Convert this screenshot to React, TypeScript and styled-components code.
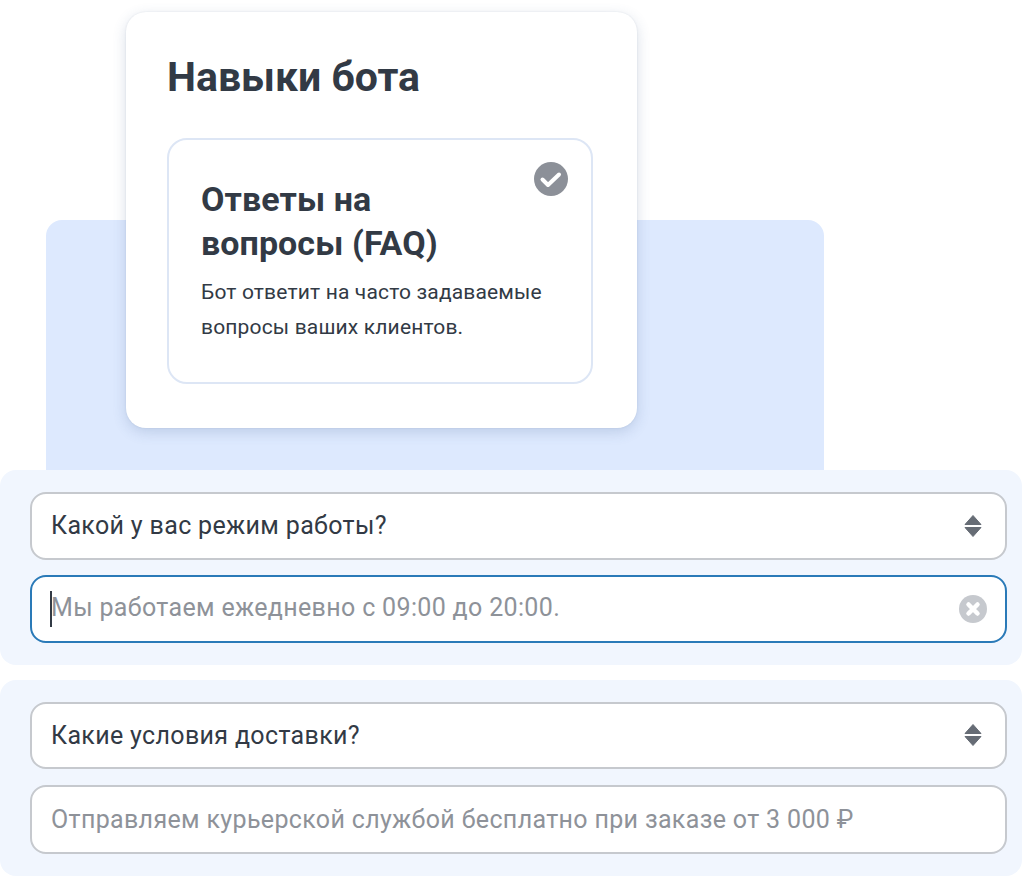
import { createGlobalStyle, styled } from "styled-components";

const GlobalStyle = createGlobalStyle`
  html, body {
    margin: 0;
    background: #fff;
    font-family: Roboto, "Noto Sans", sans-serif;
  }
`;

const Page = styled.div`
  width: 1022px;
  height: 876px;
  overflow: hidden;
  padding-top: 12px;
  box-sizing: border-box;
`;

const Hero = styled.div`
  position: relative;
  height: 458px;
  display: flex;
  flex-direction: column;
  justify-content: flex-end;
  padding-left: 46px;
`;

const Backdrop = styled.div`
  width: 778px;
  height: 250px;
  background: #dde9fe;
  border-radius: 16px 16px 0 0;
`;

const SkillsCard = styled.section`
  position: absolute;
  top: 0;
  left: 126px;
  width: 511px;
  height: 416px;
  box-sizing: border-box;
  padding: 42px 44px 44px 41px;
  background: #fff;
  border-radius: 20px;
  box-shadow: 0 4px 14px rgba(60, 90, 140, 0.2), 0 0 2px rgba(60, 80, 110, 0.12);
`;

const Title = styled.h2`
  margin: 0 0 38px;
  font-size: 41px;
  line-height: 46px;
  font-weight: 700;
  color: #323a45;
`;

const SkillCard = styled.div`
  position: relative;
  height: 246px;
  box-sizing: border-box;
  padding: 37px 20px 0 32px;
  border: 2px solid #dde6f5;
  border-radius: 20px;
`;

const SkillName = styled.h3`
  margin: 0 0 10px;
  font-size: 34px;
  letter-spacing: 0.08px;
  line-height: 44px;
  font-weight: 700;
  color: #323a45;
`;

const SkillText = styled.p`
  margin: 0;
  font-size: 21px;
  letter-spacing: 0.16px;
  line-height: 35px;
  color: #323a45;
`;

const CheckBadge = styled.svg`
  position: absolute;
  top: 22px;
  right: 23.5px;
  width: 34px;
  height: 34px;
`;

const Panel = styled.div`
  display: flex;
  flex-direction: column;
  gap: 15.5px;
  padding: 22px 15.5px 22px 30px;
  background: #f1f6fe;
  border-radius: 16px;
  & + & {
    margin-top: 15px;
  }
`;

const Field = styled.div<{ $focused?: boolean; $height: number }>`
  display: flex;
  align-items: center;
  justify-content: space-between;
  height: ${({ $height }) => $height}px;
  box-sizing: border-box;
  padding: 0 18px 0 19px;
  background: #fff;
  border: 2px solid ${({ $focused }) => ($focused ? "#2a7ab8" : "#c6c9ce")};
  border-radius: 16px;
`;

const FieldText = styled.span<{ $muted?: boolean }>`
  font-size: 25px;
  letter-spacing: 0.34px;
  color: ${({ $muted }) => ($muted ? "#8e9299" : "#323a45")};
`;

const Caret = styled.span`
  display: inline-block;
  width: 2px;
  height: 36px;
  margin: 0 -1px;
  vertical-align: middle;
  background: #323a45;
`;

const IconSlot = styled.span`
  display: flex;
  justify-content: center;
  width: 28px;
`;

const Stepper = () => (
  <IconSlot>
    <svg width="18" height="24" viewBox="0 0 18 24">
      <path d="M9 1.5 17 10.5H1Z" fill="#666c75" stroke="#666c75" strokeLinejoin="round" />
      <path d="M9 22.5 17 13.5H1Z" fill="#666c75" stroke="#666c75" strokeLinejoin="round" />
    </svg>
  </IconSlot>
);

const ClearIcon = () => (
  <IconSlot>
    <svg width="28" height="28" viewBox="0 0 28 28">
      <circle cx="14" cy="14" r="14" fill="#c6c9ce" />
      <path d="M9.5 9.5 18.5 18.5M18.5 9.5 9.5 18.5" stroke="#fff" strokeWidth="4.5" strokeLinecap="round" />
    </svg>
  </IconSlot>
);

export default function App() {
  return (
    <>
      <GlobalStyle />
      <Page>
        <Hero>
          <Backdrop />
          <SkillsCard>
            <Title>Навыки бота</Title>
            <SkillCard>
              <CheckBadge viewBox="0 0 34 34">
                <circle cx="17" cy="17" r="17" fill="#8c9098" />
                <path d="M8.5 17.5 14 23 25 12.5" fill="none" stroke="#fff" strokeWidth="4" strokeLinecap="round" strokeLinejoin="round" />
              </CheckBadge>
              <SkillName>
                Ответы на
                <br />
                вопросы (FAQ)
              </SkillName>
              <SkillText>
                Бот ответит на часто задаваемые
                <br />
                вопросы ваших клиентов.
              </SkillText>
            </SkillCard>
          </SkillsCard>
        </Hero>
        <Panel>
          <Field $height={67.5}>
            <FieldText>Какой у вас режим работы?</FieldText>
            <Stepper />
          </Field>
          <Field $height={67.5} $focused>
            <FieldText $muted>
              <Caret />
              Мы работаем ежедневно с 09:00 до 20:00.
            </FieldText>
            <ClearIcon />
          </Field>
        </Panel>
        <Panel>
          <Field $height={67.5}>
            <FieldText>Какие условия доставки?</FieldText>
            <Stepper />
          </Field>
          <Field $height={69.5}>
            <FieldText $muted>Отправляем курьерской службой бесплатно при заказе от 3 000 ₽</FieldText>
          </Field>
        </Panel>
      </Page>
    </>
  );
}
